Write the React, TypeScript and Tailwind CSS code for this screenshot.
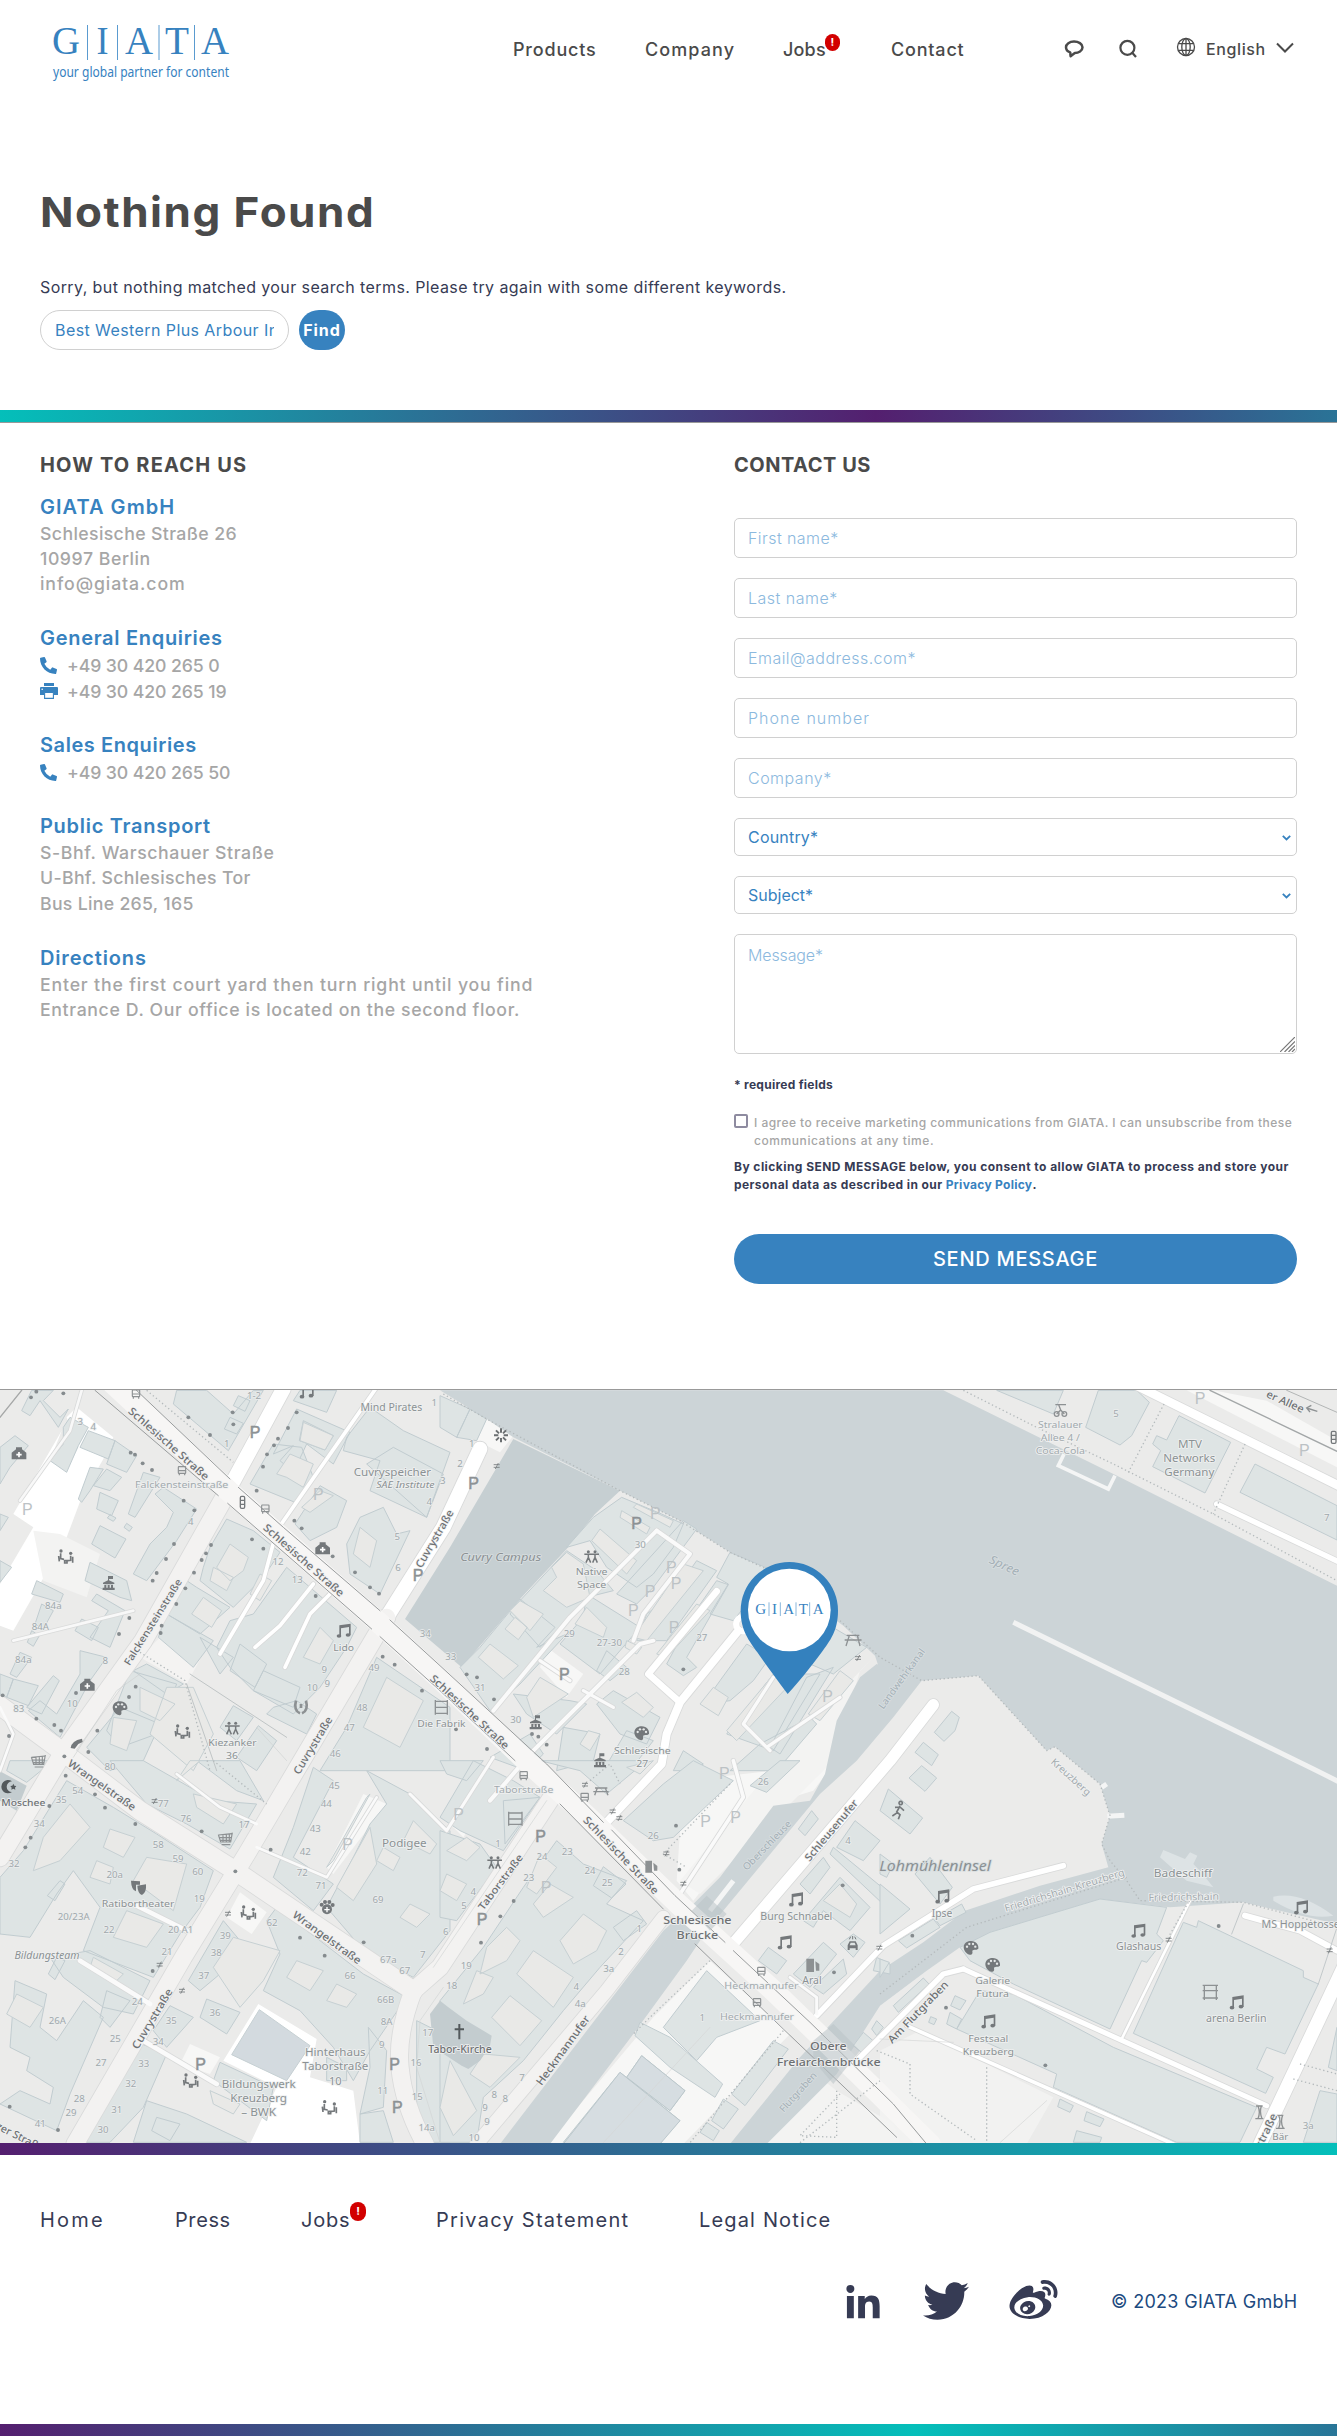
import type { ReactNode } from "react";
import { FaLinkedinIn, FaPhoneAlt, FaTwitter, FaWeibo } from "react-icons/fa";

/* ---------- brand ---------- */

function Logo() {
  return (
    <svg viewBox="40 10 200 82" className="h-[82px] w-[200px]" aria-label="GIATA">
      <g fill="#3782bf" fontFamily="Liberation Serif, serif" fontSize="39.5">
        <text x="52" y="54.3" textLength="28" lengthAdjust="spacingAndGlyphs">G</text>
        <text x="96.5" y="54.3" textLength="12" lengthAdjust="spacingAndGlyphs">I</text>
        <text x="125" y="54.3" textLength="28" lengthAdjust="spacingAndGlyphs">A</text>
        <text x="165" y="54.3" textLength="24" lengthAdjust="spacingAndGlyphs">T</text>
        <text x="201" y="54.3" textLength="28" lengthAdjust="spacingAndGlyphs">A</text>
      </g>
      <path d="M87.5 25V60M117.5 25V60M159 25V60M194.5 25V60" stroke="#5a9bd0" strokeWidth="1" />
      <text x="53" y="77.3" fill="#3782bf" fontFamily="Noto Sans, sans-serif" fontSize="13.6" textLength="176" lengthAdjust="spacingAndGlyphs">
        your global partner for content
      </text>
    </svg>
  );
}

function Badge({ className = "" }: { className?: string }) {
  return (
    <span className={`flex shrink-0 items-center justify-center rounded-full bg-[#d20000] text-[11px] leading-none font-bold text-white ${className}`}>!</span>
  );
}

function Header() {
  return (
    <header className="flex h-[100px] items-start text-[#4a4a4a]">
      <div className="ml-[40px] pt-[10px]">
        <Logo />
      </div>
      <nav className="ml-[273px] flex gap-[50px] pt-[37.5px] text-[18px] leading-[24px] font-[450] whitespace-nowrap">
        <a className="w-[82px] tracking-[0.045em]">Products</a>
        <a className="w-[88px] tracking-[0.061em]">Company</a>
        <a className="flex w-[58px] tracking-[0.01em]">
          <span className="w-[42px]">Jobs</span>
          <Badge className="-mt-[3.5px] h-[17px] w-[15px]" />
        </a>
        <a className="w-[72px] tracking-[0.045em]">Contact</a>
      </nav>
      <div className="ml-[101px] flex pt-[37px]">
        <svg viewBox="0 0 20 20" className="mt-[2px] h-5 w-5" fill="none" stroke="#4a4a4a" strokeWidth="2.5" strokeLinejoin="round">
          <path d="M6.2 13.4C3.4 12.500 2 10.500 2 8.300C2 4.900 5.500 2.600 10 2.600S18.500 4.900 18.500 8.300C18.500 12 14.500 14 10.800 14L6.600 17.200Z" />
        </svg>
        <svg viewBox="0 0 20 20" className="mt-[2px] ml-[35px] h-5 w-5" fill="none" stroke="#4a4a4a" strokeWidth="2.2">
          <circle cx="8.400" cy="8.800" r="7" />
          <path d="M12.600 13L17 18" />
        </svg>
        <svg viewBox="0 0 20 20" className="ml-[37px] h-5 w-5" fill="none" stroke="#4a4a4a" strokeWidth="1.300">
          <circle cx="10" cy="10" r="8.500" />
          <ellipse cx="10" cy="10" rx="4.200" ry="8.500" />
          <path d="M10 1.500V18.500M2.300 6.700H17.700M2.300 13.300H17.700" />
        </svg>
        <span className="ml-[10px] w-[59px] text-[16px] leading-[24px] font-[450] tracking-[0.038em]">English</span>
        <svg viewBox="0 0 18 12" className="mt-[5px] ml-[11px] h-3 w-[18px]" fill="none" stroke="#4a4a4a" strokeWidth="2">
          <path d="M1 1.500L9 9.500L17 1.500" />
        </svg>
      </div>
    </header>
  );
}

/* ---------- contact ---------- */

function PrinterIcon() {
  return (
    <svg viewBox="0 0 18 16" className="h-[16px] w-[18px]">
      <path d="M4 0H14V3H4ZM1 4H17Q18 4 18 5V12H14V9H4V12H0V5Q0 4 1 4Z" fill="#3782bf" />
      <path d="M4.600 9.500H13.400V15.400H4.600Z" fill="#fff" stroke="#3782bf" strokeWidth="1.100" />
      <circle cx="2.200" cy="6.200" r=".8" fill="#fff" />
    </svg>
  );
}

function Block({ title, titleClass, children }: { title: string; titleClass: string; children: ReactNode }) {
  return (
    <section>
      <h3 className={`text-[20px] leading-[28px] font-semibold text-[#3782bf] ${titleClass}`}>{title}</h3>
      <div className="text-[17.7px] leading-[25.2px] font-[450] text-[#a6a6a6]">{children}</div>
    </section>
  );
}

function Phone({ number, fax, className = "" }: { number: string; fax?: boolean; className?: string }) {
  return (
    <div className={`flex h-[26px] items-center tracking-[-0.006em] ${className}`}>
      <span className="w-[27px]">{fax ? <PrinterIcon /> : <FaPhoneAlt className="h-[17px] w-[17px] text-[#3782bf]" />}</span>
      <span>{number}</span>
    </div>
  );
}

const field =
  "block w-full rounded-[5px] border border-[#d0d0d0] bg-white px-[13px] text-[16px] text-[#3782bf] placeholder:font-light placeholder:text-[#8cb9de] placeholder:opacity-100";

function Select({ label, tracking }: { label: string; tracking: string }) {
  return (
    <div className="relative">
      <select className={`${field} h-[38px] appearance-none ${tracking}`}>
        <option>{label}</option>
      </select>
      <svg viewBox="0 0 9 6" className="absolute top-[17px] right-[6px] h-[6px] w-[9px]" fill="none" stroke="#3782bf" strokeWidth="1.800">
        <path d="M.8.8L4.500 4.500L8.200.8" />
      </svg>
    </div>
  );
}

function ContactForm() {
  return (
    <form className="w-[563px]">
      <h2 className="text-[20px] leading-6 font-bold tracking-[0.026em] text-[#4a4a4a]">CONTACT US</h2>
      <div className="mt-[41px] flex flex-col gap-5">
        <input className={`${field} h-10 tracking-[0.027em]`} placeholder="First name*" />
        <input className={`${field} h-10 tracking-[0.031em]`} placeholder="Last name*" />
        <input className={`${field} h-10 tracking-[0.029em]`} placeholder="Email@address.com*" />
        <input className={`${field} h-10 tracking-[0.065em]`} placeholder="Phone number" />
        <input className={`${field} h-10 tracking-[0.031em]`} placeholder="Company*" />
        <Select label="Country*" tracking="tracking-[0.012em]" />
        <Select label="Subject*" tracking="tracking-[0em]" />
        <div className="relative">
          <textarea className={`${field} h-[120px] resize-none pt-[8px] leading-6 tracking-[-0.008em]`} placeholder="Message*" />
          <svg viewBox="0 0 15 15" className="absolute right-[2px] bottom-[2px] h-[15px] w-[15px]" stroke="#777" strokeWidth="1.200">
            <path d="M0 15L15 0M4.500 15L15 4.500M8.500 15L15 8.500M12 15L15 12" />
          </svg>
        </div>
      </div>
      <p className="mt-[22px] text-[12px] leading-[18px] font-bold tracking-[0.022em] text-[#363b54]">* required fields</p>
      <label className="mt-[20px] flex text-[12px] leading-[18px] font-[450] whitespace-nowrap text-[#a6a6a6]">
        <span className="h-[14px] w-[14px] rounded-[2px] border-2 border-[#8e8ba0]" />
        <span className="ml-[6px]">
          <span className="block tracking-[0.038em]">I agree to receive marketing communications from GIATA. I can unsubscribe from these</span>
          <span className="block tracking-[0.048em]">communications at any time.</span>
        </span>
      </label>
      <p className="mt-[8px] text-[12px] leading-[18px] font-bold whitespace-nowrap text-[#363b54]">
        <span className="block tracking-[0.038em]">By clicking SEND MESSAGE below, you consent to allow GIATA to process and store your</span>
        <span className="block tracking-[0.035em]">
          personal data as described in our <a className="tracking-[0.024em] text-[#3782bf]">Privacy Policy</a>.
        </span>
      </p>
      <button type="button" className="mt-[40px] h-[50px] w-full rounded-[25px] bg-[#3782bf] text-[20px] font-medium tracking-[0.036em] text-white">
        SEND MESSAGE
      </button>
    </form>
  );
}

/* ---------- map: drawn on a 4011 x 2257 canvas, three units to a pixel ---------- */

const BUILDINGS: { at: string; d: string }[] = [
  {
    at: "translate(0 0)",
    d: `M0 200L45 165L85 195L30 260L0 310Z M95 29H160L130 60L180 110L205 85L175 140L120 60L90 105L65 90Z M210 110L265 140L235 195L200 275L150 240L190 190V140Z
    M265 150L345 180L325 235L240 200Z M345 180L410 225L380 275L320 250Z M270 260L310 265L270 330L245 365L235 355Z M320 265L365 290L330 330L280 315Z M300 335L355 360L335 405L290 385Z M430 275L480 290L405 410L385 400Z
    M465 340L490 320L590 385L530 480L440 600L400 580L450 490L500 440L520 395Z M300 435L378 475L345 532L275 490Z M380 428L397 440L388 452L372 440Z M330 402L348 412L340 422L322 412Z
    M270 545L380 600L395 660L360 650L255 600Z M110 600L190 640L180 665L95 640Z M125 670L160 690L130 745L105 730Z M95 750L118 765L100 797L82 785Z M60 815L95 830L50 890L30 880Z M0 880L40 895L20 950L0 940Z M40 895L115 915L85 975L20 950Z
    M160 885L178 900L125 1000L80 980Z M290 640L375 690L330 800L270 770L325 690L275 660Z M245 715L295 740L275 780L225 750Z M240 810L320 830L270 900L180 1070L85 990L120 960L170 1000L240 880Z
    M0 540L35 560L0 605Z M0 400L25 410L0 450Z M530 29H620L700 100L760 29H790L685 210L520 70Z M715 45L750 60L735 92L700 75Z M690 110L730 128L710 160L673 145Z
    M890 85L1050 155L1000 250L920 190L880 275L840 240L880 195L820 220Z M820 190L905 200L940 290L885 365L750 310Z M910 120L1000 165L975 208L898 180Z
    M1040 170L1110 80L1210 150L1350 215L1280 410L1110 330L1140 240L1030 210Z M1100 250L1180 200L1330 280L1280 410Z M960 315L1040 360L1010 440L930 480L885 430Z M1080 410L1150 380L1190 460L1230 450L1140 640L1050 580L1040 490Z
    M900 29H1010L980 95L880 60Z M680 415L760 450L840 515L790 590L700 680L600 600L610 560L630 500Z M860 560L1070 740L1040 800L960 920L880 1000L760 930L690 860L650 800L690 720L760 700Z M590 620L690 680L600 760L500 700L560 600Z
    M500 700L640 780L580 860L475 770Z M720 790L800 850L765 920L690 870Z M600 770L700 830L660 880Z M790 870L900 920L880 980L760 930Z M390 870L530 910L470 1060L360 1100L320 1050Z M700 975L760 1010L710 1080L660 1040Z M775 1035L830 1080L770 1170L710 1130Z
    M360 980L480 1030L430 1140L330 1170L260 1100Z M1130 830L1350 980V1170H960L1040 1040Z M820 980L890 960L950 1000L920 1060L800 1000Z M440 850L550 910L500 940L400 870Z`,
  },
  {
    at: "translate(1320 0)",
    d: `M0 45L90 85L50 170L0 140Z M90 85L140 115L110 180L50 170Z M545 350L665 400L730 430L700 500L640 580L590 620L500 560L450 480L380 500L460 410Z M730 420L770 445L640 620L590 670L530 640Z
    M770 540L830 570L680 780L590 780L620 700L700 640Z M870 515L1000 570L880 720L810 700L865 610L830 590Z M830 600L865 612L740 830L770 860L730 885L680 850L760 700Z
    M380 510L470 570L520 630L440 650L380 720L300 800L210 700L240 660Z M240 655L345 740L290 800L380 760L240 910L150 990L60 860L120 800Z M440 640L600 740L480 880L360 790L430 710Z M500 810L560 860L510 900L470 870Z
    M520 930L660 1010L620 1090L540 1060L470 970Z M220 940L390 960L440 970L350 1060L260 1000Z M370 1040L480 1060L460 1140L350 1170Z M920 790L990 830L940 900L870 960L790 970L840 900Z M1000 880L1140 880L1000 1110L860 1060Z M1110 1010L1130 1030L1010 1170H870L960 1090Z
    M1100 890L1180 860L1020 1120L990 1100Z M1170 735L1280 800L1180 880L1110 850Z M730 1110L790 1150L760 1170H700Z M490 1170L560 1050L640 1080L570 1170Z M150 1130L270 1060L310 1120L260 1170Z`,
  },
  {
    at: "translate(2640 0)",
    d: `M350 29H550L520 100Z M655 29H770L808 65L755 165L720 193L617 140Z M897 105L1052 185L975 337L818 258L842 210L818 190L830 165L860 178Z M1125 250L1371 375V478L1080 335Z
    M215 992L238 1010L225 1050L192 1082L163 1055Z M130 1085L175 1122L155 1155L105 1115Z`,
  },
  {
    at: "translate(0 1140)",
    d: `M30 0H160L80 65L20 30Z M200 60L340 140L470 220L640 330L600 440L540 520L460 650L250 570L300 440L220 330L170 400L90 530L0 520V350L70 270Z M330 0H430L640 120L770 130L690 265L560 190L440 130Z M590 0H720L790 120L710 90Z
    M45 660L140 700L120 800L170 840L250 720L310 770L210 1000L170 1110L0 1030L60 990L150 1030L160 980L80 930L90 890L30 860Z M150 590L270 570L450 660L400 760L310 740L190 650Z M180 360L195 370L165 420L142 405Z M170 590L195 600L165 657L145 640Z M320 690L390 720L330 800L300 770Z
    M670 480L720 540L660 640L600 690L565 660Z M510 735L580 770L500 860L460 810Z M620 715L720 755L680 820L600 770Z M400 840L500 880L430 1040L330 1145H240Z M440 1020L560 1060L740 1145H400Z M470 1070L540 1090L510 1140L455 1110Z
    M830 440L960 540L1090 640L1220 710L1110 870L1060 960L1000 860L900 750L790 690L840 580L800 480Z M940 20L1000 60L880 290L1000 370L940 450L820 350L880 200Z M1100 30L1230 100L1350 210V510L1240 650L1100 580L980 440L1060 290L1110 190L1160 130Z
    M1105 800L1160 870L1150 1040L1080 1060L1110 920Z M1080 1060L1150 1050L1180 1145H1080Z M1250 780L1350 830V1145H1290L1250 1050Z M980 890L1040 920V960H980Z M660 905L820 980L800 1080L640 960Z`,
  },
  {
    at: "translate(1320 1140)",
    d: `M0 0H130L80 60L20 40Z M100 0L220 60L300 110L190 270L60 210L0 170Z M190 120L300 110L195 250Z M0 210L120 250L170 320L50 480L0 470Z M350 240L430 310L560 360L500 430L610 480L480 620L370 750L250 900L130 1010L110 1145H0V720L130 560L250 380Z
    M490 318L558 370L515 412L460 375Z M590 450L620 490L550 540L520 500Z M670 70L760 0L880 60L700 230L640 240L550 180Z M1020 0L1080 0L980 95L930 75Z M1115 150L1135 175L1095 225L1075 205Z M1245 180L1320 240L1270 300L1190 260Z
    M1150 290L1170 320L1110 400L1080 370Z M1200 350L1290 440L1230 510L1150 450L1120 500L1090 480Z M985 560L1040 600L1010 640L955 600Z M1150 545L1190 580L1110 680L1060 640Z M1210 595L1220 640L1150 700L1120 680Z M1240 520L1275 545L1240 590L1200 550Z
    M800 630L960 780L830 830L770 900L670 800Z M600 785L690 830L780 910L848 970L825 1010L690 920L585 825Z M605 885L735 990L690 1050L560 950Z M540 935L720 1080L660 1145H370Z M1000 840L1045 865L915 1035L875 1000Z M850 1015L895 1045L850 1105L815 1080Z M800 1085L838 1110L820 1140L780 1115Z
    M1310 590L1350 610V640L1300 630Z M1270 815L1305 845L1270 880L1240 855Z M300 0H620L500 100L420 30Z M1180 260L1350 400V450L1170 280Z M1310 780L1330 800L1310 825L1295 805Z`,
  },
  {
    at: "translate(2640 1140)",
    d: `M125 15L170 52L135 92L87 52Z M25 85L128 172L90 220L0 150Z M0 280L40 310L20 350L0 340Z M0 370L90 445L0 520Z M105 340L150 290L217 380L180 430Z M245 430L258 455L180 495L165 475Z M160 475L180 500L80 562L55 540Z M0 595L28 605L0 650Z M40 735L130 652L147 670L55 755Z
    M330 515L660 415L860 440L830 520L850 540L800 605L785 600L690 805L400 670L270 600L240 560Z M955 480L1270 630V650L1315 670L1215 880L1160 860L1130 925L1180 950L1157 998L760 818L910 485L950 500Z
    M300 690L400 700L700 860L1130 1040L1080 1145H890L520 980L530 940L230 805Z M225 705L258 720L240 748L212 735Z M210 755L245 775L230 805L200 790Z M152 768L170 775L162 792L146 785Z M540 1015L580 1035L570 1055L533 1038Z M620 1053L672 1075L660 1098L612 1080Z M590 1110L665 1130L660 1145H580Z M1320 990L1371 1000V1145H1270Z M1371 800L1345 920L1371 930Z`,
  },
];

const COURTYARDS: { at: string; d: string }[] = [
  {
    at: "translate(0 0)",
    d: `M910 125L1000 165L975 208L900 180Z M870 220L940 250L910 320L860 290L830 280Z M690 490L745 530L730 570L690 600L650 560Z M610 650L665 690L635 740L575 700Z M780 580L815 600L780 660L750 640Z M1080 440L1130 480L1110 560L1060 520Z M960 330L1000 345L930 395L905 380Z
    M960 740L1000 780L960 850L910 830Z M420 920L525 970L480 1020L420 990Z M500 920L580 920L640 1060L580 1170L450 1060Z M340 1010L410 1020L380 1110L330 1090Z M1160 890L1270 960L1200 1100L1090 1040Z M640 560L700 590L680 630L630 600Z`,
  },
  {
    at: "translate(1320 0)",
    d: `M380 515L430 550L450 650L380 680L310 630L350 590L335 560Z M480 445L590 540L560 580L455 480Z M240 660L310 700L270 750L210 690Z M225 710L262 740L235 777L195 745Z M150 790L235 855L190 895L115 830Z M440 680L500 740L490 770L405 730Z M300 890L385 940L280 1010L260 950Z M590 935L640 980L610 1010L545 965Z
    M730 550L790 570L620 780L580 770Z M770 670L650 820L680 830L810 690Z M560 780L605 800L590 820L555 800Z M820 920L865 950L835 1005L780 970Z M1010 870L1060 900L890 1080L860 1050Z M445 1050L480 1060L450 1110L420 1090Z M545 390L630 440L620 460L540 410Z M590 370L700 420L690 440L580 380Z M1200 870L1240 900L1140 1020L1105 1000Z`,
  },
  {
    at: "translate(0 1140)",
    d: `M210 130L270 200L180 300L100 330L130 230Z M330 205L405 230L370 290L310 260Z M440 290L560 310L520 450L400 360Z M290 300L340 320L330 370L270 350Z M380 450L490 490L440 560L340 530Z M50 700L130 740L90 800L20 760Z M280 590L370 640L350 660L270 620Z M580 100L710 130L670 190L590 140Z M890 600L970 630L930 690L860 650Z M1010 670L1070 700L1040 740L980 720Z
    M1110 200L1130 310L1060 420L1010 380Z M1150 260L1200 290L1180 330L1130 300Z M1230 430L1290 460L1250 500L1200 470Z M1240 180L1310 250L1290 280L1210 240Z M700 530L840 570L790 660L720 740L640 620Z M630 990L720 1030L700 1060L640 1030Z M530 60L600 0L570 0Z M1110 100L1000 300L980 320L1100 110Z`,
  },
  {
    at: "translate(1320 1140)",
    d: `M80 230L120 260L80 300L20 270Z M20 340L80 370L50 420L0 390Z M300 280L350 320L290 400L260 380Z M330 370L400 410L310 470L280 430Z M430 460L500 510L470 570L400 610L360 540Z M280 570L400 650L340 740L230 640Z M200 500L240 540L200 600L120 640L140 560Z M210 705L305 780L240 855L155 770Z M110 630L160 650L130 700L70 730Z M30 900L110 1050L40 1125L0 1040Z M130 880L240 890L150 980L90 940Z M1200 370L1250 430L1230 470L1150 420Z M560 20L640 0L600 40Z`,
  },
];

type Stroke = [d: string, width: number, color: string];

const ROADS: Stroke[] = [
  ["M0 975L190 1115L420 1290L705 1470L1240 1830", 56, "#f3f2f1"],
  ["M690 320L430 780L190 1115L0 1430", 54, "#f3f2f1"],
  ["M850 25L690 320", 44, "#ffffff"],
  ["M1440 205L1330 440L1160 710", 44, "#ffffff"],
  ["M1160 710L1000 980L740 1420L550 1730L225 2290", 52, "#f3f2f1"],
  ["M1665 1235L1320 1760L1240 1830Q1190 1960 1200 2060Q1210 2170 1275 2290", 52, "#f3f2f1"],
  ["M1990 1610L1820 1830L1430 2290", 40, "#f3f2f1"],
  ["M2190 1700L2670 1140L2800 972", 34, "#ffffff"],
  ["M1815 1330L1985 1150L2000 1060L2040 965L2215 750", 24, "#ffffff"],
  ["M2040 965L1945 880L2150 632", 20, "#ffffff"],
  ["M3190 1455L2920 1525L2650 1695L2450 1905", 17, "#ffffff"],
  ["M2890 1765L2830 1780L2640 1970L2560 2050", 16, "#ffffff"],
  ["M2890 1765L3800 2175", 15, "#ffffff"],
  ["M2720 1935L3520 2290", 11, "#ffffff"],
  ["M4040 1740L3780 2290", 40, "#ffffff"],
  ["M3570 1560L3365 1975", 8, "#ffffff"],
  ["M3735 1605L3900 1650L4011 1710", 18, "#ffffff"],
  ["M3400 10L4030 322", 26, "#ffffff"],
  ["M3650 370L4030 550", 16, "#ffffff"],
  ["M1130 20L830 450L790 600L660 820", 11, "#ffffff"],
  ["M990 640L930 700L855 860", 11, "#ffffff"],
  ["M940 610L840 735L765 800", 11, "#ffffff"],
  ["M1970 450L1710 710L1480 990", 12, "#fafafa"],
  ["M1960 780L1920 790L1600 1110L1470 1260", 12, "#fafafa"],
  ["M1970 450L2070 520L1930 700L1900 780", 12, "#fafafa"],
  ["M2520 950L2300 1100M2310 1110L2230 1030L2320 890", 10, "#fafafa"],
  ["M1750 930L1840 980M1620 840L1710 900", 10, "#fafafa"],
  ["M240 1740L450 1870M430 1980L650 2110M400 1570L560 1650", 14, "#fafafa"],
  ["M2200 1140L2230 1250L2040 1540", 11, "#fafafa"],
  ["M245 29L210 150L60 360M40 780L400 690", 8, "#f8f8f8"],
  ["M0 980L40 1060L0 1170M530 1180L660 1280L770 1330", 8, "#fafafa"],
  ["M770 1400L980 1490L1130 1250", 8, "#fafafa"],
  ["M1230 1240L1340 1350L1480 1130", 9, "#fafafa"],
  ["M2370 1790L2450 1850V1900", 9, "#fafafa"],
];

const THIN: Stroke[] = [
  ["M400 20L690 295M715 320L850 440L1140 690M1170 718L1320 855L1640 1150L1810 1325M1835 1348L2025 1545L2175 1685M2200 1710L2430 1925L2680 2170L2780 2290", 3, "#999c9d"],
  ["M285 29L655 345M683 368L1115 745M1140 768L1320 930L1545 1140M1680 1270L1990 1585M2085 1690L2350 1945L2690 2270", 3, "#999c9d"],
  ["M0 110L65 29", 4, "#a5a7a7"],
  ["M3630 29L4011 212", 4, "#a3a7a8"],
  ["M3860 29L4011 95", 3, "#b2b5b5"],
  ["M420 880L350 930L220 1130M860 1140L770 1040", 2, "#cfd1d1"],
  ["M560 910L650 1170M570 880L860 1070", 3, "#c0c5c6"],
  ["M3730 1570L3695 1660M3955 1810L4011 1640", 3, "#c2c8ca"],
  ["M1810 2286L2130 1940M2640 1975L2860 1985M3000 2286L3140 2160", 2, "#d4d6d6"],
  ["M1330 1820L1260 1920L1250 2060L1320 2286M1300 1760L1640 1260", 2, "#d2d4d4"],
];

const DOTTED = [
  "M1330 40L1465 118L1860 330L2040 420L2190 515L2300 565",
  "M2520 720L2640 830L2765 900L2935 885L3140 1110L3165 1098L3300 1210L3330 1305L3305 1390L3330 1440L3380 1500L3420 1560L3730 1565L4011 1640",
  "M440 29L700 245",
  "M3492 70L3385 275",
  "M3735 190L3640 400",
  "M2890 29L3110 140L3340 250L3640 400L4011 600",
  "M420 815L555 900L630 1170",
  "M640 1140L800 1270",
  "M2640 1840L2900 1640L3380 1490",
  "M3565 1565L3505 1670",
  "M2960 2060V2286",
  "M2400 2286L2640 2100M2510 2130V2270L2400 2265L2520 2140",
  "M3900 2050L4011 2080M3880 2095L4011 2130",
  "M2630 2010L2730 2050V2140L2930 2280",
  "M2130 1740L1950 1910L1900 1960M2350 1950L2070 2286",
  "M2190 1210L1990 1420L2060 1460",
  "M1770 1200L1830 1150L1860 1210",
];

type Label = [text: string, x: number, y: number, size: number, width: number, rotate?: number, tone?: "dark" | "mid" | "soft" | "water", italic?: boolean];

const LABELS: Label[] = [
  ["Schlesische Straße", 505, 190, 32, 310, 41.5, "dark"],
  ["Schlesische Straße", 910, 540, 32, 310, 41.5, "dark"],
  ["Schlesische Straße", 1408, 995, 32, 310, 43, "dark"],
  ["Schlesische Straße", 1862, 1425, 32, 310, 46, "dark"],
  ["Falckensteinstraße", 460, 725, 30, 300, -58, "dark"],
  ["Cuvrystraße", 1305, 475, 32, 195, -60, "dark"],
  ["Cuvrystraße", 940, 1095, 32, 195, -59, "dark"],
  ["Cuvrystraße", 458, 1915, 32, 205, -59, "dark"],
  ["Wrangelstraße", 305, 1215, 32, 240, 35, "dark"],
  ["Wrangelstraße", 980, 1672, 32, 245, 36, "dark"],
  ["Taborstraße", 1503, 1505, 30, 200, -53, "dark"],
  ["Heckmannufer", 1690, 2010, 32, 250, -54, "dark"],
  ["Schleusenufer", 2495, 1350, 31, 230, -50, "dark"],
  ["Am Flutgraben", 2755, 1895, 32, 245, -46, "dark"],
  ["itzer Straße", 50, 2265, 32, 175, 27, "dark"],
  ["er Allee", 3855, 64, 32, 120, 24, "dark"],
  ["straße", 3800, 2250, 32, 110, -64, "dark"],
  ["Schlesische", 2092, 1630, 34, 205, 0, "dark"],
  ["Brücke", 2092, 1676, 34, 125, 0, "dark"],
  ["Obere", 2485, 2008, 34, 110, 0, "dark"],
  ["Freiarchenbrücke", 2486, 2055, 34, 312, 0, "dark"],
  ["Lohmühleninsel", 2805, 1470, 42, 335, 0, "mid", true],
  ["Cuvry Campus", 1502, 540, 34, 243, 0, "mid", true],
  ["Mind Pirates", 1174, 90, 30, 185, 0, "mid"],
  ["Cuvryspeicher", 1177, 286, 34, 232, 0, "mid"],
  ["SAE Institute", 1216, 323, 27, 175, 0, "mid", true],
  ["Falckensteinstraße", 545, 322, 28, 280, 0, "soft"],
  ["Taborstraße", 1571, 1236, 28, 178, 0, "soft"],
  ["Heckmannufer", 2284, 1825, 28, 222, 0, "soft"],
  ["Heckmannufer", 2271, 1917, 28, 222, 0, "soft"],
  ["Lido", 1031, 811, 28, 62, 0, "mid"],
  ["Kiezanker", 697, 1096, 29, 145, 0, "mid"],
  ["36", 696, 1135, 28, 36, 0, "mid"],
  ["Die Fabrik", 1324, 1038, 29, 145, 0, "mid"],
  ["Native", 1775, 584, 29, 95, 0, "mid"],
  ["Space", 1775, 621, 29, 88, 0, "mid"],
  ["Schlesische", 1927, 1119, 29, 170, 0, "mid"],
  ["27", 1927, 1158, 28, 36, 0, "mid"],
  ["Moschee", 70, 1276, 29, 132, 0, "dark"],
  ["Podigee", 1213, 1399, 33, 134, 0, "mid"],
  ["Ratibortheater", 414, 1579, 29, 218, 0, "mid"],
  ["Bildungsteam", 141, 1735, 30, 195, 0, "mid", true],
  ["Bildungswerk", 776, 2121, 32, 222, 0, "mid"],
  ["Kreuzberg", 776, 2163, 32, 170, 0, "mid"],
  ["– BWK", 776, 2205, 32, 105, 0, "mid"],
  ["Hinterhaus", 1006, 2027, 32, 182, 0, "mid"],
  ["Taborstraße", 1006, 2069, 32, 198, 0, "mid"],
  ["10", 1006, 2112, 32, 38, 0, "mid"],
  ["Tabor-Kirche", 1380, 2017, 30, 190, 0, "dark"],
  ["Burg Schnabel", 2389, 1619, 30, 216, 0, "mid"],
  ["Aral", 2436, 1810, 30, 58, 0, "mid"],
  ["Ipse", 2826, 1608, 30, 62, 0, "mid"],
  ["Galerie", 2978, 1811, 29, 105, 0, "mid"],
  ["Futura", 2978, 1850, 29, 98, 0, "mid"],
  ["Festsaal", 2965, 1983, 29, 120, 0, "mid"],
  ["Kreuzberg", 2965, 2022, 29, 153, 0, "mid"],
  ["Glashaus", 3416, 1709, 30, 136, 0, "mid"],
  ["Badeschiff", 3549, 1489, 32, 175, 0, "mid"],
  ["arena Berlin", 3709, 1924, 30, 182, 0, "mid"],
  ["MS Hoppetosse", 3902, 1643, 30, 235, 0, "mid"],
  ["Bär", 3841, 2279, 29, 48, 0, "mid"],
  ["MTV", 3570, 202, 33, 72, 0, "mid"],
  ["Networks", 3568, 245, 33, 156, 0, "mid"],
  ["Germany", 3568, 287, 33, 150, 0, "mid"],
  ["Stralauer", 3181, 143, 29, 134, 0, "soft"],
  ["Allee 4 /", 3181, 181, 29, 118, 0, "soft"],
  ["Coca-Cola", 3181, 220, 29, 148, 0, "soft"],
  ["Spree", 3012, 556, 36, 95, 25, "water", true],
  ["Landwehrkanal", 2706, 895, 29, 215, -54, "water"],
  ["Oberschleuse", 2302, 1395, 29, 195, -46, "water"],
  ["Flutgraben", 2395, 2135, 29, 150, -48, "water"],
  ["Kreuzberg", 3212, 1190, 29, 150, 42, "soft"],
  ["Friedrichshain-Kreuzberg", 3194, 1530, 30, 375, -17, "soft"],
  ["Friedrichshain", 3551, 1550, 30, 212, -1, "soft"],
];

const NUMBERS = `3,241,132;4,280,149;1-2,762,55;1,680,198;4,572,433;84a,160,685;84A,121,749;84a,70,847;8,316,851;83,56,994;10,217,978;80,330,1168;12,834,554;13,892,606;34,1276,769;49,1122,870;9,973,876;9,982,918;10,937,932;48,1086,991;47,1048,1050;46,1006,1128;5,1192,478;6,1194,571;4,1288,373;3,1328,309;1,1303,75;1,1415,199;2,1380,260;33,1352,837;29,1708,769;30,1921,503;27-30,1828,797;28,1873,882;31,1440,932;30,1547,1028;27,2105,782;54,233,1241;35,184,1267;34,118,1338;32,42,1459;77,490,1279;76,558,1325;58,475,1403;59,534,1443;60,593,1482;20a,344,1493;19,598,1564;20/23A,221,1618;22,327,1657;20 A1,542,1656;21,501,1724;39,676,1675;38,649,1727;62,816,1635;37,611,1796;24,412,1873;36,645,1907;35,514,1930;26A,172,1931;25,346,1984;34,475,1993;27,303,2055;33,431,2058;32,392,2119;28,238,2165;31,350,2196;29,213,2207;41,121,2239;30,309,2257;17,732,1343;45,1003,1224;44,979,1278;43,946,1354;42,916,1423;72,907,1485;71,963,1524;69,1134,1567;7,1268,1732;67a,1165,1748;67,1214,1781;66,1050,1794;66B,1157,1866;8A,1160,1933;9,1145,2003;17,1283,1965;16,1248,2056;11,1148,2139;15,1252,2158;14a,1280,2250;1,1494,1400;24,1626,1439;23,1702,1424;24,1770,1481;23,1586,1501;25,1822,1515;4,1420,1542;5,1392,1585;6,1337,1664;19,1399,1765;18,1355,1826;1,1918,1655;2,1863,1724;3a,1826,1773;4,1729,1827;4a,1741,1878;7,1566,2100;8,1483,2151;8,1516,2164;9,1455,2191;9,1461,2232;10,1422,2280;26,1960,1376;26,2290,1213;1,2107,1920;4,2544,1389;5,3348,110;7,3980,422;3a,3925,2246`
  .split(";")
  .map((s) => s.split(","));

const PARKING: [number, number, 0 | 1][] = [
  [765, 172, 1], [82, 402, 0], [1254, 602, 1], [955, 358, 0], [1421, 325, 1], [1910, 445, 1], [1966, 415, 0], [2014, 577, 0], [2028, 625, 0], [1950, 650, 0], [1900, 705, 0],
  [2022, 758, 0], [1693, 898, 1], [2483, 965, 0], [3600, 69, 0], [3913, 225, 0], [602, 2068, 1], [1184, 2068, 1], [1192, 2197, 1], [1043, 1408, 0], [1376, 1317, 0],
  [1622, 1385, 1], [1446, 1634, 1], [1638, 1538, 0], [2173, 1195, 0], [2117, 1340, 0], [2207, 1328, 0],
];

const NOTES: [number, number][] = [[1031, 750], [2388, 1556], [2354, 1685], [2827, 1547], [2965, 1922], [3415, 1650], [3710, 1865], [3903, 1580], [920, 32]];
const PLAY: [number, number][] = [[197, 528], [547, 1053], [745, 1596], [572, 2100], [988, 2180]];
const PAIRS: [number, number][] = [[697, 1043], [1775, 528], [1484, 1446]];
const KITS: [number, number][] = [[57, 218], [262, 912], [968, 503]];
const HALLS: [number, number][] = [[326, 608], [1607, 1026], [1800, 1140]];
const PALETTES: [number, number][] = [[360, 983], [1925, 1058], [2913, 1702], [2978, 1753]];
const STOPS: [number, number][] = [[546, 270], [796, 385], [408, 40], [1571, 1185], [1754, 1250], [2284, 1772], [2271, 1866]];
const BARS: [number, number][] = [[464, 1261], [684, 1599], [479, 1752], [546, 1830], [1490, 256], [1755, 1212], [1838, 1292], [1858, 1312], [1999, 1418], [2050, 1509], [2638, 1701], [3506, 1677], [3989, 1709], [2574, 832]];
const CARTS: [number, number][] = [[116, 1142], [677, 1375]];
const DOTS = `93,50 109,33 190,38 392,216 405,222 428,248 456,268 551,360 583,389 522,490 498,535 470,577 458,600 388,712 357,760 228,937 8,944 109,1014 163,1033 183,1050 27,1066 193,1127 265,1114 292,1050 387,949 407,918 565,110 630,163 698,95 700,131 890,95 864,142 834,174 822,194 801,221 789,258 770,330 756,476 790,504 633,493 618,518 605,538 582,576 556,623 529,670 485,735 482,757 883,420 905,443 998,527 1065,575 1110,620 1137,639 947,646 1148,828 1184,852 1266,930 1400,881 1431,890 1482,956 1596,1060 1615,1068 1640,1092 1461,1105 1368,1046 2050,866 197,1185 285,1241 315,1281 148,1276 92,1371 76,1400 406,1330 605,1352 706,1472 812,1407 900,1671 974,1725 1091,1685 458,1771 174,2248 29,2178 1541,1561 1501,1607 1443,1686 2028,1335 2038,1467 2528,1514 2502,1775 2737,1665 2838,1881 3136,2054 3656,1636`
  .split(" ")
  .map((p) => p.split(","));

const TONES = { dark: "#6d7073", mid: "#8b9194", soft: "#a2aaae", water: "#a3afb6" } as const;

function Marks() {
  return (
    <g fill="#74787b" stroke="none">
      {DOTS.map(([x, y], i) => (
        <circle key={i} cx={x} cy={y} r="5.800" fill="#858b8e" />
      ))}
      {NOTES.map(([x, y], i) => (
        <g key={i} transform={`translate(${x} ${y})`}>
          <path d="M-13 -16L21 -21V14H16V-11L-8 -7V17H-13Z" />
          <ellipse cx="-14" cy="16" rx="7" ry="5.500" />
          <ellipse cx="13" cy="13" rx="7" ry="5.500" />
        </g>
      ))}
      {PLAY.map(([x, y], i) => (
        <g key={i} transform={`translate(${x} ${y})`}>
          <circle cx="-14" cy="-17" r="5" />
          <circle cx="15" cy="-10" r="5" />
          <path d="M-15 -10V6L-5 8M-21 -2L-19 14M15 -3V11L6 12M21 0V18M-3 12H4V19H-3Z" fill="none" stroke="#74787b" strokeWidth="5" />
        </g>
      ))}
      {PAIRS.map(([x, y], i) => (
        <g key={i} transform={`translate(${x} ${y})`}>
          <circle cx="-10" cy="-15" r="4.500" />
          <circle cx="10" cy="-15" r="4.500" />
          <path d="M-22 -7H22M-10 -7V5M10 -7V5M-17 18L-10 2L-3 18M17 18L10 2L3 18" fill="none" stroke="#74787b" strokeWidth="4.500" />
        </g>
      ))}
      {KITS.map(([x, y], i) => (
        <g key={i} transform={`translate(${x} ${y})`}>
          <path d="M-22 18V-2L-9 -12V-18H9V-12L22 -2V18Z" />
          <path d="M-8 4H8M0 -4V12" stroke="#fff" strokeWidth="5" />
        </g>
      ))}
      {HALLS.map(([x, y], i) => (
        <path
          key={i}
          transform={`translate(${x} ${y})`}
          d="M-2 -22H13V-13H1V-9L17 -2V2H-17V-2L-2 -9ZM-13 4H13V13H18V20H-18V13H-13ZM-7 5V13H-3V5ZM3 5V13H7V5Z"
          fillRule="evenodd"
        />
      ))}
      {PALETTES.map(([x, y], i) => (
        <g key={i} transform={`translate(${x} ${y})`}>
          <path d="M0 -21C16 -21 24 -8 22 2C16 8 4 2 4 10C6 18 2 22 -4 20C-18 16 -22 4 -22 -4C-20 -16 -10 -21 0 -21Z" />
          <g fill="#e6e9e9">
            <circle cx="-12" cy="-4" r="3.500" />
            <circle cx="-5" cy="-12" r="3.500" />
            <circle cx="6" cy="-12" r="3.500" />
            <circle cx="13" cy="-4" r="3.500" />
          </g>
        </g>
      ))}
      {STOPS.map(([x, y], i) => (
        <g key={i} transform={`translate(${x} ${y})`} fill="none" stroke="#8d9193" strokeWidth="3.500">
          <rect x="-11" y="-12" width="22" height="20" rx="2" />
          <path d="M-11 0H11M-8 8V14M8 8V14" />
        </g>
      ))}
      {BARS.map(([x, y], i) => (
        <path key={i} transform={`translate(${x} ${y})`} d="M-9 -4H9M-9 4H9M-4 9L5 -9" stroke="#74787b" strokeWidth="2.500" />
      ))}
      {CARTS.map(([x, y], i) => (
        <path key={i} transform={`translate(${x} ${y})`} d="M-22 -12L18 -16M-19 -4H17M-16 4H16M-22 -13L-15 9H15L20 -19M-12 17H14M-8 -12V8M2 -14V8M11 -14V8" fill="none" stroke="#8d9193" strokeWidth="3.500" />
      ))}
      {/* tree */}
      <g stroke="#6b6f71" strokeWidth="6" transform="translate(1503 164)">
        <path d="M0 -21V-8M0 8V21M-21 0H-8M8 0H21M-15 -15L-6 -6M6 6L15 15M15 -15L6 -6M-15 15L-6 6" />
      </g>
      {/* church, mosque */}
      <path d="M1378 1930V1976M1364 1946H1392" stroke="#53595c" strokeWidth="6" />
      <path d="M36 1202A20 20 0 1 0 36 1234A15 15 0 1 1 36 1202Z" fill="#53595c" />
      <path d="M40 1209L43 1215L49 1216L45 1221L46 1227L40 1224L34 1227L35 1221L31 1216L37 1215Z" fill="#53595c" />
      {/* theatre masks */}
      <path d="M393 1500L420 1502V1512H408V1532Q394 1528 393 1500ZM412 1515L438 1511Q440 1536 426 1543Q413 1538 412 1515Z" />
      {/* vet */}
      <circle cx="981" cy="1586" r="15" />
      <circle cx="965" cy="1572" r="6" />
      <circle cx="975" cy="1564" r="6" />
      <circle cx="988" cy="1564" r="6" />
      <circle cx="998" cy="1573" r="6" />
      <path d="M973 1587H989M981 1579V1595" stroke="#fff" strokeWidth="4" />
      {/* runner */}
      <path d="M2702 1272a5 5 0 1 1 .1 0M2700 1276L2690 1294L2700 1302L2695 1316M2692 1296L2677 1306M2685 1280L2700 1279L2712 1290" fill="none" stroke="#74787b" strokeWidth="5" />
      {/* traffic lights */}
      <g fill="none" stroke="#74787b" strokeWidth="4">
        <rect x="721" y="347" width="13" height="36" rx="4" />
        <path d="M721 359H734M721 371H734" />
        <rect x="3994" y="152" width="14" height="36" rx="4" />
        <path d="M3994 164H4008M3994 176H4008" />
      </g>
      {/* phone, care */}
      <path d="M212 1102Q214 1080 246 1074L248 1084L235 1090L224 1104Z" />
      <path d="M888 960Q880 990 900 998M918 960Q926 990 906 998M903 970V982" fill="none" stroke="#8d9193" strokeWidth="8" />
      {/* fuel pumps */}
      <g fill="#8d9193">
        <path d="M1936 1440H1956V1476H1936ZM1960 1446L1972 1456V1470H1962ZM2419 1734H2442V1774H2419ZM2446 1742L2458 1750V1770H2448Z" />
      </g>
      {/* car wash */}
      <path d="M2543 1708V1694L2549 1682H2567L2573 1694V1708H2567V1703H2549V1708ZM2549 1694H2567L2564 1686H2552Z" fillRule="evenodd" />
      <path d="M2548 1676L2552 1668M2558 1676V1666M2568 1676L2564 1668" stroke="#74787b" strokeWidth="3" />
      {/* shelves, benches and other street furniture */}
      <g fill="none" stroke="#8d9193" strokeWidth="4">
        <path d="M1304 962H1344M1304 980H1344M1304 998H1344M1306 958V1002M1342 958V1002M1524 1297H1568M1524 1315H1568M1524 1331H1568M1526 1293V1335M1566 1293V1335" />
        <path d="M3608 1814H3654M3608 1830H3654M3608 1852H3654M3613 1814V1858M3649 1814V1858M1785 1222H1822M1780 1233H1826M1792 1222L1784 1244M1816 1222L1824 1244M2540 764H2578M2534 778H2584M2548 764L2538 796M2572 764L2580 796" />
        <circle cx="3170" cy="100" r="7" />
        <circle cx="3193" cy="100" r="7" />
        <path d="M3166 72H3198M3176 72L3182 88M3182 88L3170 100M3182 88L3193 100" />
        <path d="M3768 2176H3788M3766 2214H3790M3774 2176Q3782 2195 3774 2214M3784 2176Q3778 2195 3786 2214M3830 2204H3850M3828 2243H3854M3836 2204Q3844 2224 3836 2243M3848 2204Q3840 2224 3850 2243" />
        <path d="M3920 82L3952 92M3934 74L3920 82L3930 94" />
      </g>
    </g>
  );
}

function Pin() {
  return (
    <g>
      <path d="M2222 690A146 146 0 0 1 2514 690C2514 750 2490 780 2465 815C2430 862 2400 900 2363 940C2330 895 2300 855 2272 815C2248 780 2222 750 2222 690Z" fill="#3481be" />
      <circle cx="2368" cy="688" r="124" fill="#fff" />
      <g fill="#3782bf" fontFamily="Liberation Serif, serif" fontSize="45">
        <text x="2266" y="700">G</text>
        <text x="2316" y="700">I</text>
        <text x="2350" y="700">A</text>
        <text x="2396" y="700">T</text>
        <text x="2438" y="700">A</text>
      </g>
      <path d="M2307 665V706M2341 665V706M2388 665V706M2429 665V706" stroke="#8ab7dc" strokeWidth="3" />
    </g>
  );
}

function CityMap() {
  return (
    <svg viewBox="0 28 4011 2259" preserveAspectRatio="none" className="block h-[753px] w-full bg-[#ebebea]" fontFamily="Noto Sans, sans-serif">
      <rect x="0" y="0" width="4011" height="2300" fill="#ebebea" />
      {/* open ground */}
      <g fill="#f7f7f6">
        <path fill="#fff" d="M230 80L340 170L310 235L245 350L200 470L40 750L0 735V610L100 440L40 400L185 150L150 240L200 270L235 200L200 110Z" />
        <path d="M100 450L180 460L300 520L260 650L130 600Z" fill="#f3f3f2" />
        <path d="M480 770L620 800L560 910L420 830Z" fill="#f4f3f2" />
        <path d="M720 1535L800 1595L755 1660L680 1610Z" />
        <path d="M775 1870L950 1975L930 2090L1060 2130L1080 2290H750L830 2120L670 2040Z" fill="#fff" />
        <path d="M570 1990L660 2030L630 2080L540 2050Z" />
        <path d="M2130 1740L1960 1910L1640 2290H2050L2370 1960Z" />
        <path d="M2050 1200L2500 1150L2440 1230L2310 1270L2080 1560L2030 1500Z" />
        <path d="M2620 830L2580 870L2500 1140L2100 1540L2040 1500L2400 1060Z" fill="#f3f3f2" />
        <path d="M2640 2010L2760 1950L3160 2150L3080 2290H2640Z" fill="#f2f2f1" />
        <path d="M2510 2130L2680 2230L2700 2290H2200L2420 2060Z" fill="#f3f3f2" />
        <path d="M3560 29L4011 260V180L3800 60L3640 29Z" />
        <path d="M1460 115L1540 165L1500 215L1430 180Z" />
        <path d="M1640 800L1750 880L1700 950L1620 860Z" />
        <path d="M1360 1250L1430 1310L1390 1370L1330 1310Z" />
        <path d="M1090 1240L1160 1270L1000 1480L980 1460Z" />
      </g>
      {/* water */}
      <g fill="#ccd4d7">
        <path d="M1320 29L1465 118L1540 170L1860 330L2040 420L2190 515L2290 560L2530 735L2625 825L2640 870L2765 900L2935 885L3140 1110L3165 1098L3300 1210L3330 1305L3305 1390L3325 1460L3120 1515L2895 1590L2770 1685L2640 1770L2520 1900L2400 2030L2190 2290H2300L2510 2080L2640 1875L2780 1770L2880 1700L2970 1655L3300 1555L3510 1580L3730 1565L4011 1630V615L3640 430L3360 290L2830 29Z" />
        <path d="M2630 850L2580 890L2510 1020L2475 1180L2430 1260L2320 1275L2160 1490L2080 1570L1990 1650L1500 2290H1650L1900 1960L2060 1740L2120 1650L2460 1240L2570 1140L2680 1010L2765 900Z" />
      </g>
      <path d="M1540 175L1860 330L1785 400L1700 505L1560 655L1385 860L1215 715L1350 500Z" fill="#c6cfd2" />
      <path d="M3490 1408L3555 1435L3570 1415L3592 1425L3580 1450L3600 1470L3640 1520L3560 1500L3480 1430ZM3820 1548Q3900 1530 4000 1605Q3920 1620 3820 1560Z" fill="#dde3e5" />
      {/* built-up area */}
      <g fill="#dee4e4" stroke="#c1ccd0" strokeWidth="3" strokeLinejoin="round">
        {BUILDINGS.map((b) => (
          <path key={b.at} transform={b.at} d={b.d} />
        ))}
      </g>
      <g fill="#e9e9e7" stroke="#c6d0d3" strokeWidth="3" strokeLinejoin="round">
        {COURTYARDS.map((b) => (
          <path key={b.at} transform={b.at} d={b.d} />
        ))}
      </g>
      <path d="M1320 1860L1345 1880L1400 1920L1475 1965L1470 1995L1440 2040L1405 2065L1385 2055L1300 2000L1290 1900ZM0 1172L80 1215L50 1290L0 1260Z" fill="#c3cccf" />
      <path d="M778 1887L930 1995L860 2100L695 2022Z" fill="#d3dadf" stroke="#c6d0d3" strokeWidth="3" />
      <path d="M1860 2075L2040 2220L1980 2290H1690ZM1925 2025L2055 2130L2010 2190L1880 2090Z" fill="#d6dde1" stroke="#bcc8cc" strokeWidth="3" />
      {/* streets */}
      <g fill="none" strokeLinejoin="round" strokeLinecap="round">
        {ROADS.map(([d, w], i) => (
          <path key={i} d={d} strokeWidth={w + 5} stroke="#d9dada" />
        ))}
        {ROADS.map(([d, w, c], i) => (
          <path key={i} d={d} strokeWidth={w} stroke={c} />
        ))}
        <path d="M340 10L685 330L1130 720L1320 895L1578 1140L1765 1310L2040 1575L2320 1830L2480 1985L2790 2290" stroke="#f7f6f5" strokeWidth="64" />
        {THIN.map(([d, w, c], i) => (
          <path key={i} d={d} strokeWidth={w} stroke={c} />
        ))}
        <path d="M3040 725L3940 1165L4030 1210" strokeWidth="15" stroke="#f1f2f2" strokeLinecap="butt" />
        <path d="M3192 220L3175 255L3325 325L3345 285" strokeWidth="11" stroke="#f4f5f5" strokeLinecap="butt" strokeLinejoin="miter" />
        <path d="M3322 1307L3373 1304M3305 1220L3320 1210M2130 1590L2200 1500" strokeWidth="15" stroke="#f4f5f5" strokeLinecap="butt" />
        {DOTTED.map((d, i) => (
          <path key={i} d={d} strokeWidth="4" stroke="#b4babc" strokeDasharray="4 8" strokeLinecap="butt" />
        ))}
        <circle cx="2230" cy="730" r="22" stroke="#fff" strokeWidth="18" />
      </g>
      <path d="M2075 1590L2120 1545L2180 1600L2130 1650ZM2440 1980L2500 1930L2580 2010L2500 2110L2440 2040Z" fill="#b9c2c6" opacity=".55" />
      <Marks />
      {PARKING.map(([x, y, strong], i) => (
        <text key={i} x={x} y={y} textAnchor="middle" fontSize="48" fontFamily="Liberation Sans, sans-serif" stroke={strong ? "#8c9194" : "none"} strokeWidth="1.500" fill={strong ? "#8c9194" : "#bcc2c5"}>
          P
        </text>
      ))}
      <g fontSize="29" textAnchor="middle" fill="#a0a8ac" stroke="#eceeee" strokeWidth="4" paintOrder="stroke">
        {NUMBERS.map(([n, x, y], i) => (
          <text key={i} x={x} y={y}>
            {n}
          </text>
        ))}
      </g>
      <g textAnchor="middle" stroke="#f0f1f1" strokeWidth="5" strokeLinejoin="round" paintOrder="stroke">
        {LABELS.map(([text, x, y, size, width, rotate = 0, tone = "mid", italic], i) => (
          <text
            key={i}
            transform={`translate(${x} ${y}) rotate(${rotate})`}
            y={rotate ? size * 0.3 : 0}
            fontSize={size}
            fill={TONES[tone]}
            stroke={tone === "water" || (italic && size > 32) ? "#d8dee0" : "#f0f1f1"}
            fontStyle={italic ? "italic" : "normal"}
            fontWeight={tone === "dark" ? 500 : 400}
            textLength={width}
            lengthAdjust="spacingAndGlyphs"
          >
            {text}
          </text>
        ))}
      </g>
      <Pin />
    </svg>
  );
}

/* ---------- page ---------- */

export default function App() {
  return (
    <div className="flex h-[2436px] w-[1337px] flex-col overflow-hidden bg-white font-[Inter,sans-serif]">
      <Header />

      <main className="h-[310px] pt-[87px] pl-[40px]">
        <h1 className="w-fit origin-left scale-x-[1.06] text-[41.5px] leading-[50px] font-bold tracking-[0.034em] whitespace-nowrap text-[#4a4a4a]">Nothing Found</h1>
        <p className="mt-[37.5px] text-[16px] leading-6 tracking-[0.025em] whitespace-nowrap text-[#363b54]">
          Sorry, but nothing matched your search terms. Please try again with some different keywords.
        </p>
        <div className="mt-[11.500px] flex gap-[10px]">
          <input
            className="h-10 w-[249px] rounded-[20px] border border-[#d0d0d0] px-[14px] text-[16px] tracking-[0.026em] text-[#3782bf]"
            defaultValue="Best Western Plus Arbour Inn and Suites"
          />
          <button type="button" className="h-10 w-[46px] rounded-[20px] bg-[#3782bf] text-[16px] font-bold tracking-[0.06em] text-white">
            Find
          </button>
        </div>
      </main>

      <div className="h-[13px] border-b border-[#999] bg-[linear-gradient(90deg,#04bfba_0%,#541f6f_65.5%,#04bfba_131%)]" />

      <div className="flex h-[967px] items-start border-b border-[#999] pt-[30px] pr-10 pl-10">
        <div className="w-[694px] whitespace-nowrap">
          <h2 className="text-[20px] leading-6 font-bold tracking-[0.058em] text-[#4a4a4a]">HOW TO REACH US</h2>
          <div className="mt-[15.500px] flex flex-col gap-[28px]">
            <Block title="GIATA GmbH" titleClass="tracking-[0.052em]">
              <p className="tracking-[0.021em]">Schlesische Straße 26</p>
              <p className="tracking-[0.031em]">10997 Berlin</p>
              <p className="tracking-[0.051em]">info@giata.com</p>
            </Block>
            <Block title="General Enquiries" titleClass="tracking-[0.035em]">
              <Phone number="+49 30 420 265 0" />
              <Phone number="+49 30 420 265 19" fax className="-mb-[1px]" />
            </Block>
            <Block title="Sales Enquiries" titleClass="tracking-[0.029em]">
              <Phone number="+49 30 420 265 50" className="-mb-[1px]" />
            </Block>
            <Block title="Public Transport" titleClass="tracking-[0.036em]">
              <p className="tracking-[0.034em]">S-Bhf. Warschauer Straße</p>
              <p className="tracking-[0.019em]">U-Bhf. Schlesisches Tor</p>
              <p className="tracking-[0.017em]">Bus Line 265, 165</p>
            </Block>
            <Block title="Directions" titleClass="tracking-[0.042em]">
              <p className="tracking-[0.047em]">Enter the first court yard then turn right until you find</p>
              <p className="tracking-[0.036em]">Entrance D. Our office is located on the second floor.</p>
            </Block>
          </div>
        </div>
        <ContactForm />
      </div>

      <CityMap />

      <footer className="flex h-[293px] flex-col justify-between">
        <div className="h-3 shrink-0 bg-[linear-gradient(90deg,#541f6f,#04bfba)]" />
        <div className="h-[269px] px-10 text-[#363b54]">
          <nav className="flex gap-[70px] pt-[53px] text-[20px] leading-[24px] whitespace-nowrap">
            <a className="w-[65px] tracking-[0.11em]">Home</a>
            <a className="w-[56px] tracking-[0.03em]">Press</a>
            <span className="flex w-[65px]">
              <a className="w-[49px] tracking-[0.04em]">Jobs</a>
              <Badge className="-mt-[6px] h-[19px] w-[16px]" />
            </span>
            <a className="w-[193px] tracking-[0.063em]">Privacy Statement</a>
            <a className="tracking-[0.058em]">Legal Notice</a>
          </nav>
          <div className="mt-[46px] flex h-[46px] items-center justify-end">
            <FaLinkedinIn className="mt-[5px] h-[38px] w-[36px]" />
            <FaTwitter className="ml-[41px] h-[46px] w-[48px]" />
            <FaWeibo className="ml-[39px] h-[48px] w-[49px]" />
            <span className="ml-[53px] w-[186px] text-[18px] tracking-[0.017em] whitespace-nowrap text-[#1c4a80]">© 2023 GIATA GmbH</span>
          </div>
        </div>
        <div className="h-3 shrink-0 bg-[linear-gradient(90deg,#541f6f_0%,#04bfba_68.4%,#541f6f_136.8%)]" />
      </footer>
    </div>
  );
}
